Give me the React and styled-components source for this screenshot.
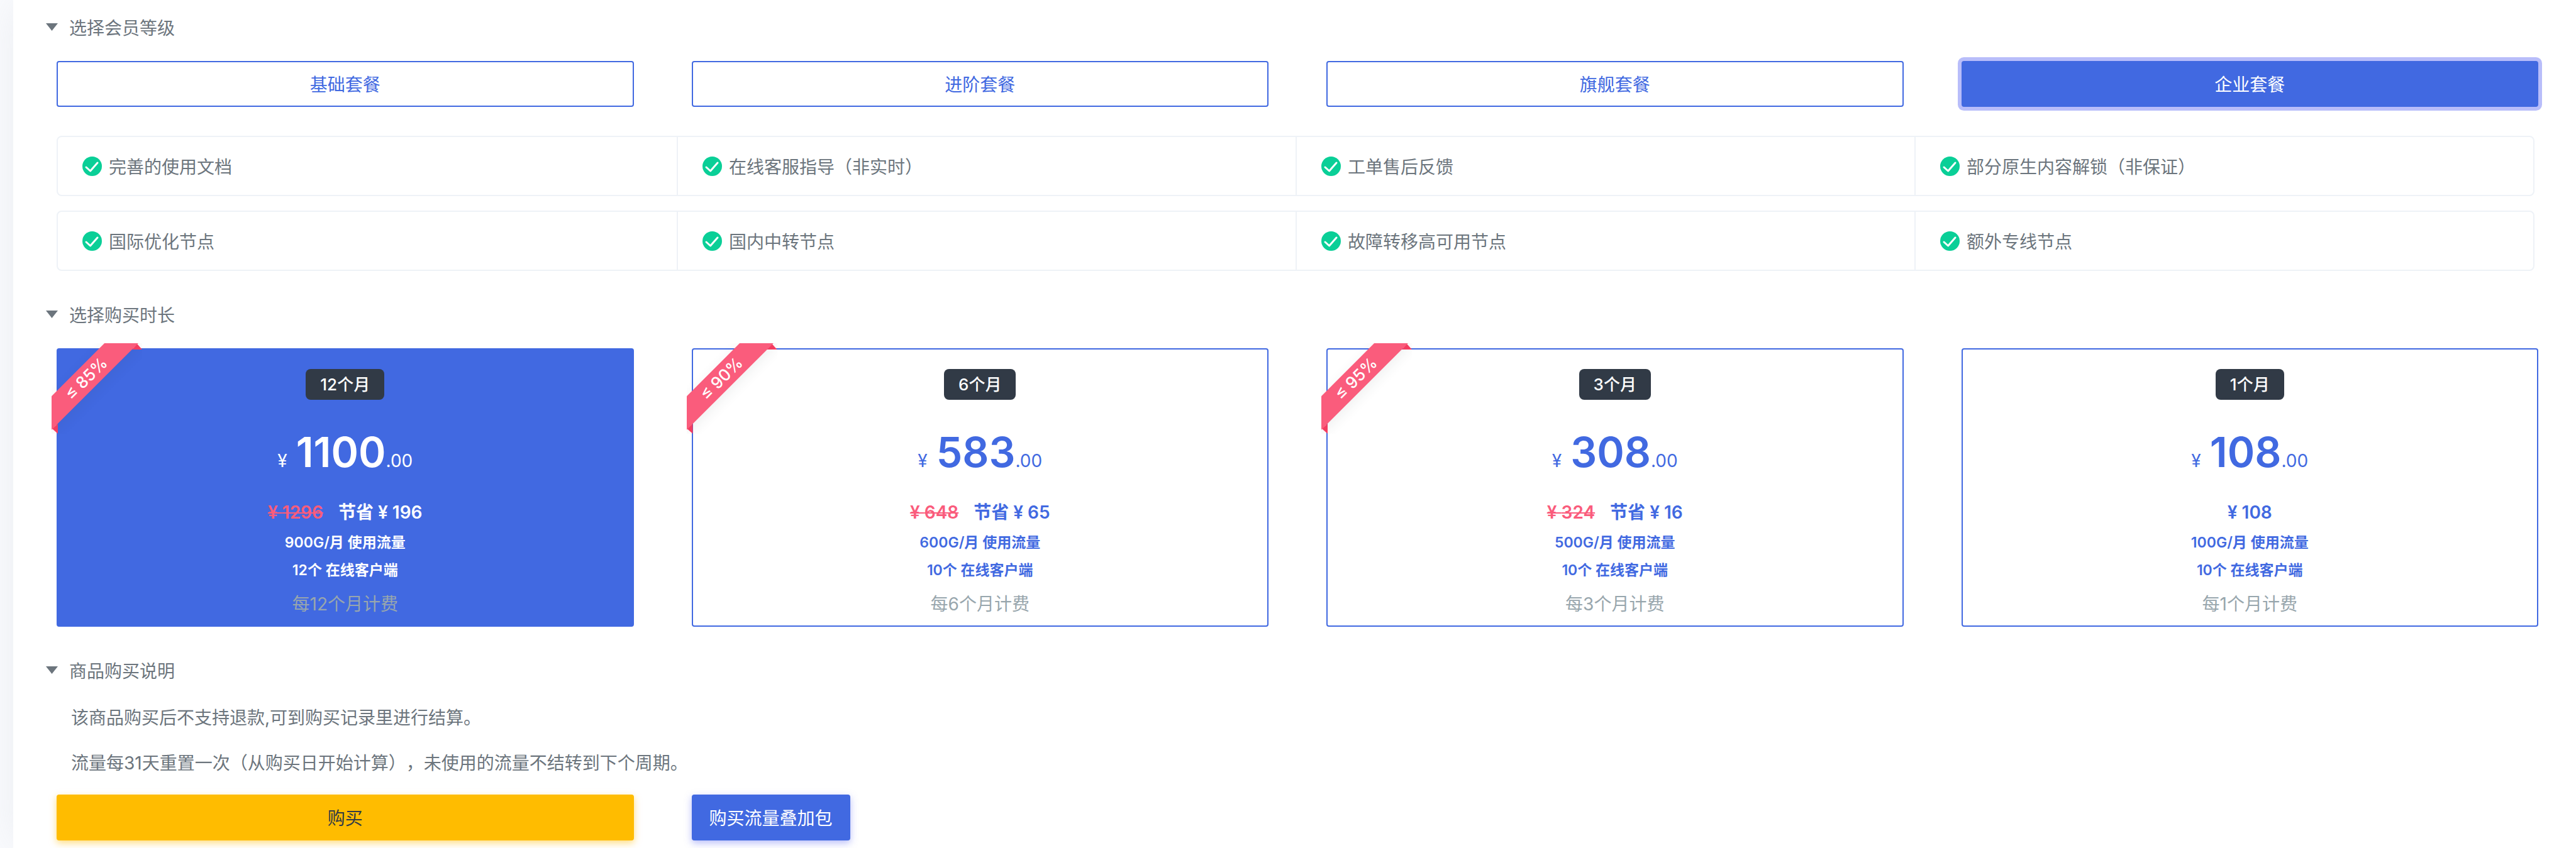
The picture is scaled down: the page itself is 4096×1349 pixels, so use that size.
import React, { useState } from "react";
import styled, { createGlobalStyle, css } from "styled-components";

const color = {
  primary: "#4169e1",
  text: "#6c757d",
  muted: "#98a6ad",
  danger: "#fa5c7c",
  dangerDark: "#fb3d62",
  success: "#0acf97",
  warning: "#ffbc00",
  dark: "#313a46",
  line: "#eef2f7",
};

const GlobalStyle = createGlobalStyle`
  *, *::before, *::after { box-sizing: border-box; }
  body {
    margin: 0;
    background: #fafbfe;
    color: ${color.text};
    font: 400 28px/40px Inter, "Noto Sans CJK SC", sans-serif;
    text-spacing-trim: space-all;
  }
  button { font: inherit; cursor: pointer; }
`;

const Page = styled.div`
  padding-left: 21px;
  overflow: hidden;
`;

const Panel = styled.main`
  min-height: 100vh;
  padding: 25px 60px 12px 52px;
  background: #fff;
  box-shadow: 0 0 67px rgba(154, 161, 171, 0.15);
`;

const Section = styled.details`
  & + & { margin-top: 51px; }
`;

const Heading = styled.summary`
  display: flex;
  align-items: center;
  gap: 18px;
  margin-bottom: 32px;
  list-style: none;
  cursor: pointer;
  &::-webkit-details-marker { display: none; }
`;

const Caret = styled.svg`
  width: 19px;
  height: 12px;
  margin-bottom: 4px;
  fill: currentColor;
`;

const Columns = styled.div`
  display: grid;
  grid-template-columns: repeat(4, minmax(0, 1fr));
  gap: 92px;
  padding-left: 17px;
`;

const buttonBase = css`
  height: 73px;
  padding: 2px 26px 0;
  border: 2px solid ${color.primary};
  border-radius: 4px;
  text-align: center;
  white-space: nowrap;
`;

const PlanButton = styled.button`
  ${buttonBase}
  color: ${(p) => (p.$active ? "#fff" : color.primary)};
  background: ${(p) => (p.$active ? color.primary : "#fff")};
  box-shadow: ${(p) => (p.$active ? "0 0 0 6px rgba(114, 124, 245, 0.5)" : "none")};
  outline: none;
`;

const FeatureGroups = styled.div`
  display: grid;
  gap: 23px;
  margin-top: 46px;
  padding: 0 6px 0 17px;
`;

const FeatureRow = styled.ul`
  display: grid;
  grid-template-columns: repeat(4, minmax(0, 1fr));
  margin: 0;
  padding: 0;
  border: 2px solid ${color.line};
  border-radius: 8px;
  list-style: none;
`;

const Feature = styled.li`
  display: flex;
  align-items: center;
  gap: 11px;
  height: 92px;
  padding: 4px 0 0 39px;
  & + & { border-left: 2px solid ${color.line}; }
`;

const CheckIcon = styled.svg`
  width: 31px;
  height: 31px;
  margin-bottom: 4px;
`;

const Card = styled.button`
  position: relative;
  display: flex;
  flex-direction: column;
  align-items: center;
  padding: 31px 0 12px;
  border: 2px solid ${color.primary};
  border-radius: 4px;
  color: ${(p) => (p.$active ? "#fff" : color.primary)};
  background: ${(p) => (p.$active ? color.primary : "#fff")};
`;

const RibbonBox = styled.span`
  position: absolute;
  top: -10px;
  left: -10px;
  width: 144px;
  height: 144px;
  overflow: hidden;

  &::before, &::after {
    content: "";
    position: absolute;
    background: ${color.dangerDark};
  }
  &::before {
    top: 1px;
    left: 128px;
    width: 16px;
    height: 9px;
    clip-path: polygon(50% 0, 100% 100%, 0 100%);
  }
  &::after {
    top: 128px;
    left: 1px;
    width: 9px;
    height: 16px;
    clip-path: polygon(0 50%, 100% 0, 100% 100%);
  }
`;

const Ribbon = styled.span`
  position: absolute;
  z-index: 1;
  top: 37px;
  left: -45px;
  width: 200px;
  height: 38px;
  color: #fff;
  background: ${color.danger};
  box-shadow: 0 5px 20px rgba(49, 58, 70, 0.08);
  font-size: 26px;
  font-weight: 500;
  line-height: 38px;
  text-align: center;
  transform: rotate(-45deg);
`;

const Term = styled.span`
  padding: 8px 23px;
  border-radius: 8px;
  color: #fff;
  background: ${color.dark};
  font-size: 26px;
  font-weight: 500;
  line-height: 33px;
`;

const Price = styled.span`
  display: flex;
  align-items: baseline;
  height: 84px;
  margin: 41px 0 32px;
`;

const Amount = styled.strong`
  margin-left: 14px;
  font-size: 66px;
  font-weight: 600;
  line-height: 84px;
`;

const Saving = styled.span`
  display: flex;
  gap: 24px;
  margin-bottom: 4px;
  font-weight: 600;
  line-height: 44px;
`;

const OldPrice = styled.s`
  color: ${color.danger};
`;

const Quota = styled.span`
  font-size: 23px;
  font-weight: 600;
  line-height: 44px;
`;

const Cycle = styled.span`
  margin-top: 10px;
  color: ${color.muted};
  line-height: 44px;
`;

const Notes = styled.div`
  display: grid;
  gap: 32px;
  margin-bottom: 30px;
  padding: 2px 0 0 40px;
`;

const Note = styled.p`
  margin: 0;
`;

const BuyButton = styled.button`
  ${buttonBase}
  border-color: ${color.warning};
  color: ${color.dark};
  background: ${color.warning};
  box-shadow: 0 4px 12px rgba(255, 188, 0, 0.5);
`;

const AddonButton = styled.button`
  ${buttonBase}
  justify-self: start;
  color: #fff;
  background: ${color.primary};
  box-shadow: 0 4px 12px rgba(114, 124, 245, 0.5);
`;

const plans = ["基础套餐", "进阶套餐", "旗舰套餐", "企业套餐"];

const features = [
  ["完善的使用文档", "在线客服指导（非实时）", "工单售后反馈", "部分原生内容解锁（非保证）"],
  ["国际优化节点", "国内中转节点", "故障转移高可用节点", "额外专线节点"],
];

const terms = [
  { months: 12, price: 1100, old: 1296, saved: 196, traffic: 900, clients: 12, rate: 85 },
  { months: 6, price: 583, old: 648, saved: 65, traffic: 600, clients: 10, rate: 90 },
  { months: 3, price: 308, old: 324, saved: 16, traffic: 500, clients: 10, rate: 95 },
  { months: 1, price: 108, traffic: 100, clients: 10 },
];

function Group({ title, children }) {
  return (
    <Section open>
      <Heading>
        <Caret viewBox="0 0 19 12" aria-hidden="true">
          <path d="M0 0H19L9.5 12Z" />
        </Caret>
        {title}
      </Heading>
      {children}
    </Section>
  );
}

function Check() {
  return (
    <CheckIcon viewBox="0 0 31 31" aria-hidden="true">
      <circle cx="15.5" cy="15.5" r="15.5" fill={color.success} />
      <path
        d="M6 17L12.6 23L24 10"
        fill="none"
        stroke="#fff"
        strokeWidth="3"
        strokeLinecap="round"
        strokeLinejoin="round"
      />
    </CheckIcon>
  );
}

function TermCard({ term, active, onSelect }) {
  return (
    <Card type="button" $active={active} aria-pressed={active} onClick={onSelect}>
      {term.rate && (
        <RibbonBox>
          <Ribbon>≤ {term.rate}%</Ribbon>
        </RibbonBox>
      )}
      <Term>{term.months}个月</Term>
      <Price>
        <span>¥</span>
        <Amount>{term.price}</Amount>
        <span>.00</span>
      </Price>
      <Saving>
        {term.old ? (
          <>
            <OldPrice>¥ {term.old}</OldPrice>
            <span>节省 ¥ {term.saved}</span>
          </>
        ) : (
          <span>¥ {term.price}</span>
        )}
      </Saving>
      <Quota>{term.traffic}G/月 使用流量</Quota>
      <Quota>{term.clients}个 在线客户端</Quota>
      <Cycle>每{term.months}个月计费</Cycle>
    </Card>
  );
}

export default function App() {
  const [plan, setPlan] = useState(3);
  const [months, setMonths] = useState(12);

  return (
    <Page>
      <GlobalStyle />
      <Panel>
        <Group title="选择会员等级">
          <Columns>
            {plans.map((name, i) => (
              <PlanButton key={name} type="button" $active={plan === i} onClick={() => setPlan(i)}>
                {name}
              </PlanButton>
            ))}
          </Columns>
          <FeatureGroups>
            {features.map((row) => (
              <FeatureRow key={row[0]}>
                {row.map((label) => (
                  <Feature key={label}>
                    <Check />
                    {label}
                  </Feature>
                ))}
              </FeatureRow>
            ))}
          </FeatureGroups>
        </Group>

        <Group title="选择购买时长">
          <Columns>
            {terms.map((term) => (
              <TermCard
                key={term.months}
                term={term}
                active={months === term.months}
                onSelect={() => setMonths(term.months)}
              />
            ))}
          </Columns>
        </Group>

        <Group title="商品购买说明">
          <Notes>
            <Note>该商品购买后不支持退款,可到购买记录里进行结算。</Note>
            <Note>流量每31天重置一次（从购买日开始计算），未使用的流量不结转到下个周期。</Note>
          </Notes>
          <Columns>
            <BuyButton type="button">购买</BuyButton>
            <AddonButton type="button">购买流量叠加包</AddonButton>
          </Columns>
        </Group>
      </Panel>
    </Page>
  );
}
